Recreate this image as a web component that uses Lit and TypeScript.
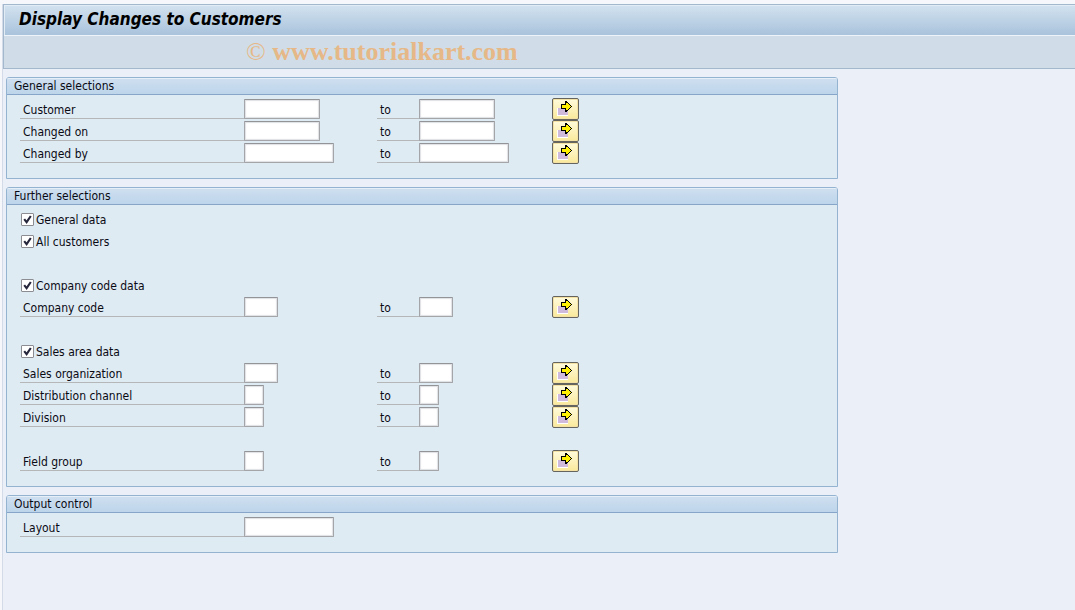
import { LitElement, html, css, nothing } from "lit";
import { customElement, property } from "lit/decorators.js";

type Size = "xs" | "sm" | "md" | "lg";

interface FieldRow {
  kind: "field";
  id: string;
  label: string;
  size: Size;
  range: boolean;
}
interface CheckRow {
  kind: "check";
  id: string;
  label: string;
}
interface GapRow {
  kind: "gap";
}
type Row = FieldRow | CheckRow | GapRow;

interface Group {
  title: string;
  rows: Row[];
}

const range = (id: string, label: string, size: Size): FieldRow => ({ kind: "field", id, label, size, range: true });
const check = (id: string, label: string): CheckRow => ({ kind: "check", id, label });
const gap: GapRow = { kind: "gap" };

const GROUPS: Group[] = [
  {
    title: "General selections",
    rows: [
      range("customer", "Customer", "md"),
      range("changed-on", "Changed on", "md"),
      range("changed-by", "Changed by", "lg"),
    ],
  },
  {
    title: "Further selections",
    rows: [
      check("general-data", "General data"),
      check("all-customers", "All customers"),
      gap,
      check("company-data", "Company code data"),
      range("company-code", "Company code", "sm"),
      gap,
      check("sales-data", "Sales area data"),
      range("sales-org", "Sales organization", "sm"),
      range("channel", "Distribution channel", "xs"),
      range("division", "Division", "xs"),
      gap,
      range("field-group", "Field group", "xs"),
    ],
  },
  {
    title: "Output control",
    rows: [{ kind: "field", id: "layout", label: "Layout", size: "lg", range: false }],
  },
];

@customElement("selection-group")
export class SelectionGroup extends LitElement {
  @property({ attribute: false }) group!: Group;

  static styles = css`
    :host {
      display: block;
    }
    .panel {
      border: 1px solid #93b3d1;
      border-radius: 3px 3px 0 0;
      background: #dfebf3;
      overflow: hidden;
    }
    .title {
      margin: 0;
      padding: 0 7px;
      font-size: 12px;
      font-weight: normal;
      line-height: 16px;
      border-bottom: 1px solid #86a5c8;
      background: linear-gradient(#cfdff0, #bdd5ea);
      box-shadow: inset 0 1px #e6eff8;
    }
    .rows {
      padding: 3px 13px 14px;
    }
    .row {
      display: grid;
      grid-template-columns: 224px 133px 42px 133px 27px;
      align-items: center;
      height: 22px;
    }
    .caption {
      box-sizing: border-box;
      height: 20px;
      padding-left: 3px;
      line-height: 22px;
      border-bottom: 1px solid #b4b6b8;
    }
    .field {
      box-sizing: border-box;
      height: 20px;
      margin: 0;
      padding: 0 3px;
      border: 1px solid #a3a5a9;
      border-top-color: #929498;
      border-radius: 1px;
      background: #fff;
      box-shadow: inset 0 0 1px 1px #dfe0e4;
      font: inherit;
    }
    .xs {
      width: 20px;
    }
    .sm {
      width: 34px;
    }
    .md {
      width: 76px;
    }
    .lg {
      width: 90px;
    }
    .more {
      box-sizing: border-box;
      width: 27px;
      height: 22px;
      padding: 0;
      border: 1px solid #66645e;
      border-radius: 2px;
      background: linear-gradient(#fffbdc, #fae99b);
      box-shadow: inset 0 0 0 1px #f3e2a4;
    }
    .more svg {
      display: block;
    }
    .check {
      display: flex;
      align-items: center;
      gap: 2px;
      height: 22px;
      padding-left: 1px;
      line-height: 22px;
    }
    .check label {
      padding-top: 2px;
    }
    .box {
      appearance: none;
      box-sizing: border-box;
      width: 13px;
      height: 13px;
      margin: 0;
      border: 1px solid #8b8d93;
      border-radius: 1px;
      background: #fff;
    }
    .box:checked {
      background: #fff
        url("data:image/svg+xml,%3Csvg xmlns='http://www.w3.org/2000/svg' viewBox='0 0 11 11'%3E%3Cpath d='M2.2 5.2 4.6 8.2 8.8 2' fill='none' stroke='%2326263c' stroke-width='2.1'/%3E%3C/svg%3E")
        center / 11px 11px no-repeat;
    }
    .gap {
      height: 22px;
    }
  `;

  private more(label: string) {
    return html`<button class="more" type="button" aria-label="Multiple selection for ${label}">
      <svg width="25" height="20" viewBox="0 0 25 20" shape-rendering="crispEdges" aria-hidden="true">
        <path d="M4 9h11v8H4z" fill="#fff" />
        <path d="M5 9h10v7H5z" fill="#cfbadb" />
        <path
          d="M8 5h4V2h2v1h1v1h1v1h1v1h1v1h1v1h-1v1h-1v1h-1v1h-1v1h-1v1h-2v-3H8z"
          fill="#000"
        />
        <path d="M9 6h4V4h2v1h1v1h1v1h1v1h-1v1h-1v1h-1v1h-2V9H9z" fill="#fff000" />
      </svg>
    </button>`;
  }

  private row(r: Row) {
    if (r.kind === "gap") return html`<div class="gap"></div>`;
    if (r.kind === "check") {
      return html`<div class="check">
        <input class="box" type="checkbox" id=${r.id} checked />
        <label for=${r.id}>${r.label}</label>
      </div>`;
    }
    return html`<div class="row">
      <label class="caption" for=${r.id}>${r.label}</label>
      <input class="field ${r.size}" id=${r.id} type="text" />
      ${r.range
        ? html`<label class="caption" for="${r.id}-to">to</label>
            <input class="field ${r.size}" id="${r.id}-to" type="text" />
            ${this.more(r.label)}`
        : nothing}
    </div>`;
  }

  render() {
    return html`<section class="panel">
      <h2 class="title">${this.group.title}</h2>
      <div class="rows">${this.group.rows.map((r) => this.row(r))}</div>
    </section>`;
  }
}

@customElement("app-root")
export class AppRoot extends LitElement {
  static styles = css`
    :host {
      display: block;
      box-sizing: border-box;
      min-height: 100vh;
      padding: 4px 0 0 2px;
      background: #f6f7fa;
      color: #0a0a14;
      font: 12px/16px "DejaVu Sans Condensed", "DejaVu Sans", sans-serif;
      font-stretch: condensed;
    }
    .window {
      box-sizing: border-box;
      min-height: calc(100vh - 4px);
      border-left: 1px solid #d3dae8;
      background: #eaeff8;
    }
    .head {
      border: 1px solid #a3b7cd;
      border-right: 0;
    }
    .heading {
      margin: 0;
      padding: 0 15px 2px;
      color: #000;
      font-size: 17px;
      font-weight: bold;
      font-style: italic;
      line-height: 28px;
      background: linear-gradient(#d3e2ef, #a9c3dc);
      box-shadow: inset 1px 1px #e2ecf5;
    }
    .toolbar {
      padding: 0 242px;
      border-top: 1px solid #edf3f9;
      background: #d0dde8;
      color: #e6b887;
      font: bold 26px/32px "Liberation Serif", serif;
      white-space: nowrap;
    }
    .mark {
      font-weight: normal;
    }
    .groups {
      display: flex;
      flex-direction: column;
      gap: 8px;
      max-width: 832px;
      padding: 8px 3px;
    }
  `;

  render() {
    return html`<main class="window">
      <header class="head">
        <h1 class="heading">Display Changes to Customers</h1>
        <div class="toolbar"><span class="mark">©</span> www.tutorialkart.com</div>
      </header>
      <div class="groups">
        ${GROUPS.map((g) => html`<selection-group .group=${g}></selection-group>`)}
      </div>
    </main>`;
  }
}
